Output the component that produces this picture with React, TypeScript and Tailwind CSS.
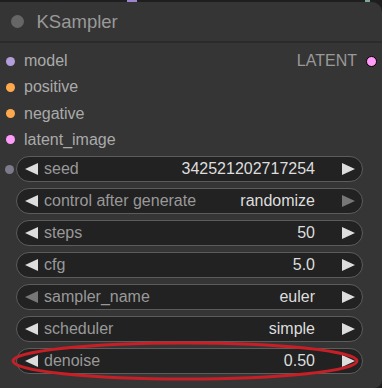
import React from 'react';

interface Slot {
  name: string;
  color: string;
}

interface Widget {
  label: string;
  value: string;
  leftOff?: boolean;
  rightOff?: boolean;
}

const inputs: Slot[] = [
  { name: 'model', color: '#b39ddb' },
  { name: 'positive', color: '#ffa94d' },
  { name: 'negative', color: '#ffa94d' },
  { name: 'latent_image', color: '#ff9cf9' },
];

const widgets: Widget[] = [
  { label: 'seed', value: '342521202717254' },
  { label: 'control after generate', value: 'randomize', rightOff: true },
  { label: 'steps', value: '50' },
  { label: 'cfg', value: '5.0' },
  { label: 'sampler_name', value: 'euler', leftOff: true },
  { label: 'scheduler', value: 'simple' },
  { label: 'denoise', value: '0.50' },
];

const Arrow: React.FC<{ dir: 'left' | 'right'; off?: boolean }> = ({ dir, off }) => (
  <svg width="13" height="12" viewBox="0 0 13 12" className="shrink-0">
    <polygon
      points={dir === 'left' ? '13,0 13,12 0,6' : '0,0 0,12 13,6'}
      fill={off ? '#777777' : '#dddddd'}
    />
  </svg>
);

const WidgetRow: React.FC<{ w: Widget; first: boolean }> = ({ w, first }) => (
  <div className="relative flex items-center h-[26px]">
    {first && (
      <span className="absolute left-[5px] top-[8.5px] w-[9px] h-[9px] rounded-full bg-[#7b7b8c]" />
    )}
    <div className="ml-[16px] w-[347px] h-[26px] flex items-center rounded-full border border-[#5c5c5c] bg-[#222222] pl-[8px] pr-[7px]">
      <Arrow dir="left" off={w.leftOff} />
      <span className="ml-[6px] text-[16px] text-[#999999] whitespace-nowrap">{w.label}</span>
      <span className="flex-1" />
      <span className="text-[16px] text-[#dddddd] whitespace-nowrap">{w.value}</span>
      <span className="w-[27px]" />
      <Arrow dir="right" off={w.rightOff} />
    </div>
  </div>
);

export default function App() {
  return (
    <div
      className="relative w-[382px] h-[388px] overflow-hidden bg-[#1e1e1e]"
      style={{ fontFamily: '"Liberation Sans", Arial, sans-serif' }}
    >
      <div className="flex h-[2px]">
        <span className="ml-[127px] w-[10px] bg-[#9d86cf]" />
        <span className="ml-auto mr-[12px] w-[5px] bg-[#7fa894]" />
      </div>
      <div className="h-[386px] bg-[#353535] rounded-tr-[10px] rounded-br-[8px] flex flex-col">
        <div className="h-[41px] shrink-0 flex items-center border-b-2 border-[#2b2b2b]">
          <span className="ml-[10.5px] w-[13px] h-[13px] rounded-full bg-[#666666]" />
          <span className="ml-[13px] text-[18.5px] text-[#999999]">KSampler</span>
        </div>
        <div className="pt-[5px] flex flex-col">
          {inputs.map((s, i) => (
            <div key={s.name} className="h-[26.25px] flex items-center">
              <span
                className="ml-[5.5px] w-[9px] h-[9px] rounded-full"
                style={{ backgroundColor: s.color }}
              />
              <span className="ml-[9.5px] text-[16px] text-[#aaaaaa]">{s.name}</span>
              {i === 0 && (
                <>
                  <span className="ml-auto text-[16px] text-[#999999]">LATENT</span>
                  <span className="ml-[9px] mr-[5px] w-[11px] h-[11px] rounded-full bg-[#ff9cf9] border border-black" />
                </>
              )}
            </div>
          ))}
        </div>
        <div className="mt-[3px] flex flex-col gap-[6px]">
          {widgets.map((w, i) => (
            <WidgetRow key={w.label} w={w} first={i === 0} />
          ))}
        </div>
      </div>
      <svg className="absolute left-0 top-0 pointer-events-none" width="382" height="388">
        <ellipse cx="185" cy="361" rx="172" ry="18" fill="none" stroke="#c81f27" strokeWidth="3" />
      </svg>
    </div>
  );
}
